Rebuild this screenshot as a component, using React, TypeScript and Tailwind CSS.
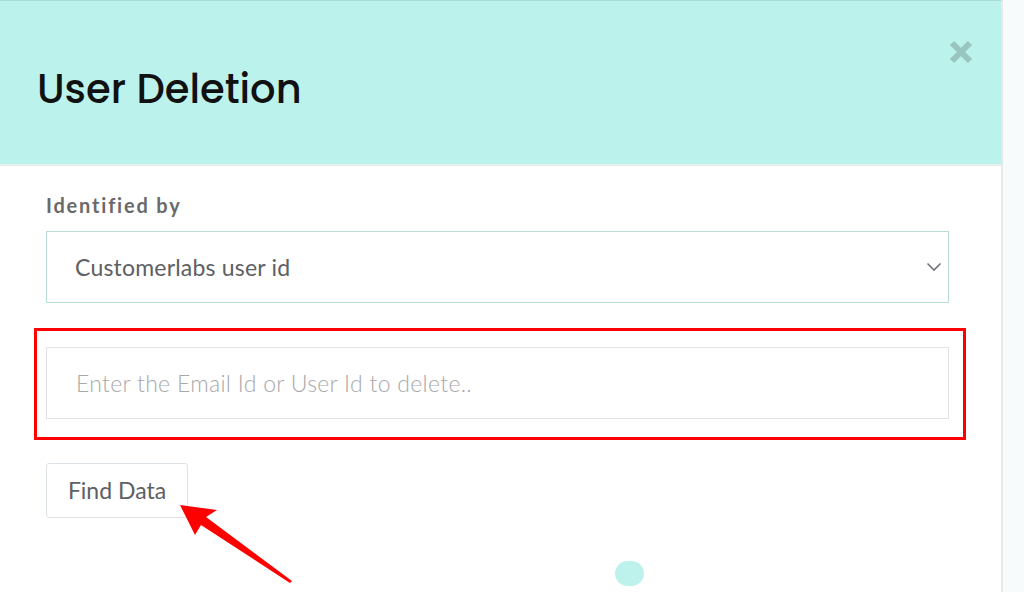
import { useState } from 'react'

const CloseIcon = () => (
  <svg width="24" height="24" viewBox="0 0 24 24" className="block">
    <path d="M3 3 L21 21 M21 3 L3 21" stroke="#98c5bd" strokeWidth="6" strokeLinecap="butt" />
  </svg>
)

const Chevron = () => (
  <svg width="16" height="10" viewBox="0 0 16 10" className="block">
    <path d="M1.5 1.5 L8 8 L14.5 1.5" fill="none" stroke="#6f7377" strokeWidth="1.6" />
  </svg>
)

const RedArrow = () => (
  <svg width="130" height="90" viewBox="0 0 130 90" className="absolute left-[175px] top-[498px]">
    <polygon points="5,7 42,12 31,19 117,83 115,85 26,27 20,37" fill="#ff0000" />
  </svg>
)

const App = () => {
  const [ value, setValue ] = useState('')

  return (
    <div className="relative flex w-[1024px] h-[592px] overflow-hidden bg-white font-['Lato','Liberation_Sans',sans-serif]">
      <div className="flex flex-col w-[1001px] bg-white">
        <div className="flex items-center justify-between h-[164px] bg-[#bcf2ec] border-t border-[#a9dcd6] pl-[37px] pr-[28px]">
          <h1 className="text-[40px] font-medium text-[#111] font-['Poppins','Inter',sans-serif] mt-[12px]">
            User Deletion
          </h1>
          <button className="self-start mt-[39px]">
            <CloseIcon />
          </button>
        </div>
        <div className="h-[2px] bg-[#e4efee]" />

        <div className="flex flex-col pt-[27px] pl-[46px] pr-[52px]">
          <label className="text-[20px] leading-[24px] font-bold text-[#6a6a6a] tracking-[1.8px]">Identified by</label>

          <div className="mt-[14px] flex items-center justify-between h-[72px] border border-[#b7ddd7] pl-[28px] pr-[6px]">
            <span className="text-[23px] text-[#5d6064] tracking-[0.2px]">Customerlabs user id</span>
            <Chevron />
          </div>

          <div className="mt-[25px] ml-[-12px] w-[932px] border-[3px] border-[#ff0000] pt-[16px] pb-[18px] pl-[9px] pr-[14px]">
            <input
              value={value}
              onChange={e => setValue(e.target.value)}
              placeholder="Enter the Email Id or User Id to delete.."
              className="w-[903px] h-[72px] border border-[#e3e3e3] px-[29px] text-[23px] font-light tracking-[0.3px] text-[#5d6064] placeholder:text-[#a8a8a8] outline-none"
            />
          </div>

          <div className="mt-[23px]">
            <button className="w-[142px] h-[55px] border border-[#dde2e6] rounded-[3px] text-[23px] text-[#5d6064]">
              Find Data
            </button>
          </div>
        </div>
      </div>

      <div className="flex-1 bg-[#f7fbfc] border-l-2 border-[#e8eaea]" />

      <RedArrow />
      <div className="absolute left-[615px] top-[561px] w-[29px] h-[25px] rounded-full bg-[#bdf2ec]" />
    </div>
  )
}

export default App
